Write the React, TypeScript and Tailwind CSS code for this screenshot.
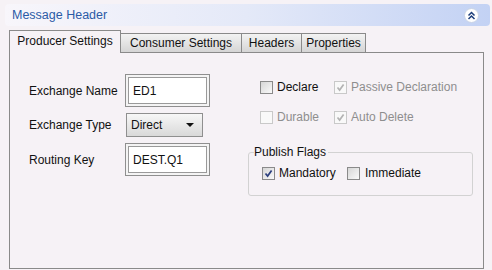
import React from "react";

const panelBg = "bg-[#f6f2f6]";

function Check({ checked = false, disabled = false }: { checked?: boolean; disabled?: boolean }) {
  const box = disabled
    ? "border-[#c9c9c9] bg-[#f9f9f9]"
    : "border-[#8a8a8a] bg-gradient-to-br from-[#d6d6d6] to-[#fafafa]";
  return (
    <span className={`relative flex h-[13px] w-[13px] shrink-0 items-center justify-center border ${box}`}>
      {checked && (
        <svg width="11" height="11" viewBox="0 0 11 11" className="absolute left-[0px] top-[0px]">
          <polyline
            points="2.5,5.5 4.6,8 8.6,2.5"
            fill="none"
            stroke={disabled ? "#b3b3b3" : "#2c3f7e"}
            strokeWidth="1.7"
          />
        </svg>
      )}
    </span>
  );
}

function CheckRow({ label, checked, disabled, gap = "gap-[4px]" }: {
  label: string; checked?: boolean; disabled?: boolean; gap?: string;
}) {
  return (
    <label className={`flex items-center ${gap} h-[20px]`}>
      <Check checked={checked} disabled={disabled} />
      <span className={disabled ? "text-[#8e8e8e]" : "text-[#111]"}>{label}</span>
    </label>
  );
}

function TextBox({ value }: { value: string }) {
  return (
    <div className="h-[33px] w-[85px] border border-[#8f8f8f] bg-[#f4f4f4] p-[2px]">
      <div className="flex h-full items-center border border-[#9a9a9a] bg-white pl-[4px] text-[#111]">
        {value}
      </div>
    </div>
  );
}

function Tab({ label, width, active }: { label: string; width: string; active?: boolean }) {
  if (active)
    return (
      <div className={`relative z-10 -mb-px flex h-[23px] ${width} items-center justify-center border-x border-t border-[#8a8a8a] ${panelBg} pb-[2px]`}>
        {label}
      </div>
    );
  return (
    <div className={`flex h-[19px] ${width} items-center justify-center border-r border-t border-[#8a8a8a] bg-gradient-to-b from-[#f3f3f3] to-[#d5d5d5]`}>
      {label}
    </div>
  );
}

export default function App() {
  return (
    <div
      className={`h-[270px] w-[492px] overflow-hidden ${panelBg} pt-[4px] text-[12px] leading-[14px] text-[#111]`}
      style={{ fontFamily: '"Liberation Sans", Arial, sans-serif' }}
    >
      {/* title bar */}
      <div className="ml-[5px] mr-[2px] flex h-[22px] items-center justify-between rounded-[4px] bg-gradient-to-r from-[#f8f6fb] via-[#e4e9f8] to-[#c3d2f4] pl-[7px] pr-[11px]">
        <span className="text-[12.5px] text-[#2b5ba6]">Message Header</span>
        <span className="flex h-[15px] w-[15px] items-center justify-center rounded-full border border-[#c9d3e6] bg-white">
          <svg width="9" height="9" viewBox="0 0 9 9">
            <polyline points="1.5,4.5 4.5,1.5 7.5,4.5" fill="none" stroke="#1d3e7c" strokeWidth="1.5" />
            <polyline points="1.5,8 4.5,5 7.5,8" fill="none" stroke="#1d3e7c" strokeWidth="1.5" />
          </svg>
        </span>
      </div>

      {/* tabs */}
      <div className="ml-[9px] mt-[4px] flex h-[22px] items-end">
        <Tab label="Producer Settings" width="w-[112px]" active />
        <Tab label="Consumer Settings" width="w-[121px]" />
        <Tab label="Headers" width="w-[60px]" />
        <Tab label="Properties" width="w-[64px]" />
      </div>

      {/* panel */}
      <div className="ml-[9px] flex h-[217px] w-[475px] items-start border border-[#8a8a8a] pl-[19px] pt-[21px]">
        <div className="grid grid-cols-[96px_85px] items-center gap-y-[6px]">
          <span>Exchange Name</span>
          <TextBox value="ED1" />
          <span>Exchange Type</span>
          <div className="ml-px flex h-[24px] w-[77px] items-center justify-between border border-[#8f8f8f] bg-gradient-to-b from-[#f7f7f7] to-[#d9d9d9] pl-[4px] pr-[8px]">
            <span>Direct</span>
            <svg width="8" height="4" viewBox="0 0 8 4">
              <polygon points="0,0 8,0 4,4" fill="#111" />
            </svg>
          </div>
          <span>Routing Key</span>
          <TextBox value="DEST.Q1" />
        </div>

        <div className="ml-[38px] mt-[3px] flex flex-col">
          <div className="flex pl-[12px]">
            <div className="w-[74px]"><CheckRow label="Declare" /></div>
            <CheckRow label="Passive Declaration" checked disabled />
          </div>
          <div className="mt-[10px] flex pl-[12px]">
            <div className="w-[74px]"><CheckRow label="Durable" disabled /></div>
            <CheckRow label="Auto Delete" checked disabled />
          </div>
          <fieldset className="mt-[18px] h-[51px] w-[225px] rounded-[3px] border border-[#d2d2d2] pl-[13px]">
            <legend className="-ml-[8px] pr-[2px] leading-[14px]">Publish Flags</legend>
            <div className="mt-[4px] flex">
              <div className="w-[85px]"><CheckRow label="Mandatory" checked /></div>
              <CheckRow label="Immediate" gap="gap-[5px]" />
            </div>
          </fieldset>
        </div>
      </div>
    </div>
  );
}
